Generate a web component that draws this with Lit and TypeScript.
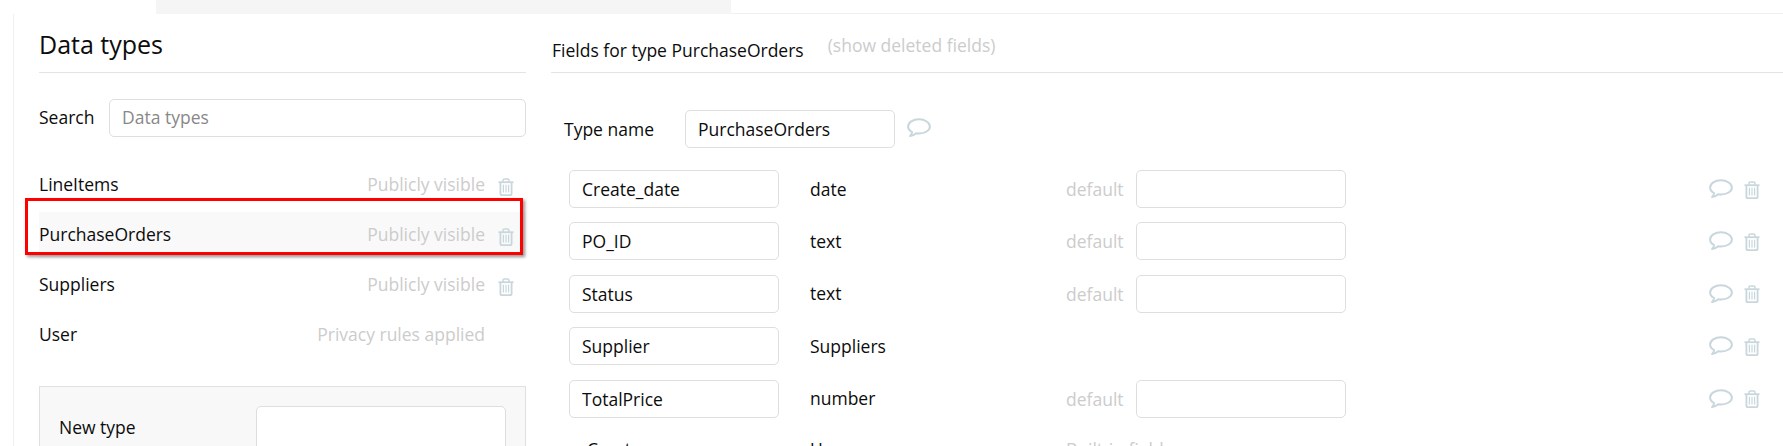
import { LitElement, html, css, svg } from "lit";
import { customElement } from "lit/decorators.js";

const comment = () => html`<svg class="comment" viewBox="0 0 24 20" width="24" height="20" aria-hidden="true">${svg`<path d="M12 1.3C6 1.3 1.1 4.5 1.1 8.6c0 2.3 1.6 4.3 4.1 5.5-.3 1.3-1 2.5-2.1 4 2.4-.4 4.6-1.5 6.1-2.8.9.1 1.8.2 2.8.2 6 0 10.9-3 10.9-6.9S18 1.3 12 1.3Z" fill="none" stroke="currentColor" stroke-width="2" stroke-linejoin="round"/>`}</svg>`;

const trash = () => html`<svg class="trash" viewBox="0 0 16 18" width="16" height="18" aria-hidden="true">${svg`<g fill="none" stroke="currentColor"><path d="M.5 4.2h15" stroke-width="1.8"/><path d="M5 4V2.4C5 1.4 5.6.9 6.4.9h3.2c.8 0 1.4.5 1.4 1.5V4" stroke-width="1.5"/><path d="M2.4 4.2v11.2c0 1 .7 1.7 1.6 1.7h8c.9 0 1.6-.7 1.6-1.7V4.2" stroke-width="1.8"/><path d="M5.4 6.8v7.6M8 6.8v7.6M10.6 6.8v7.6" stroke-width="1.2"/></g>`}</svg>`;

interface Field { name: string; type: string; hasDefault: boolean; }

const FIELDS: Field[] = [
  { name: "Create_date", type: "date", hasDefault: true },
  { name: "PO_ID", type: "text", hasDefault: true },
  { name: "Status", type: "text", hasDefault: true },
  { name: "Supplier", type: "Suppliers", hasDefault: false },
  { name: "TotalPrice", type: "number", hasDefault: true },
];

const TYPES = [
  { name: "LineItems", status: "Publicly visible", del: true, active: false },
  { name: "PurchaseOrders", status: "Publicly visible", del: true, active: true },
  { name: "Suppliers", status: "Publicly visible", del: true, active: false },
  { name: "User", status: "Privacy rules applied", del: false, active: false },
];

@customElement("app-root")
export class AppRoot extends LitElement {
  static styles = css`
    :host {
      display: block;
      width: 1783px;
      height: 446px;
      overflow: hidden;
      background: #fff;
      color: #0c0c0c;
      font-family: "Open Sans", sans-serif;
      font-size: 17.5px;
      line-height: 22px;
    }
    input {
      box-sizing: border-box;
      height: 38px;
      margin: 0;
      padding: 0 12px;
      border: 1px solid #dedede;
      border-radius: 5px;
      background: #fff;
      color: #0c0c0c;
      font: inherit;
      outline: none;
    }
    input::placeholder { color: #888; opacity: 1; }
    .comment, .trash { display: block; flex: none; color: #c9d7dd; }
    .top { display: flex; height: 14px; box-sizing: border-box; }
    .top .blank { width: 156px; }
    .top .strip { width: 575px; background: #f5f5f5; }
    .top .rest { flex: 1; border-bottom: 1px solid #f0f0f0; }
    .main {
      display: flex;
      height: 432px;
      margin-left: 13px;
      border-left: 1px solid #f0f0f0;
      padding-left: 25px;
      gap: 25px;
    }
    .left { position: relative; width: 487px; flex: none; }
    .right { flex: 1; min-width: 0; }
    .head {
      box-sizing: border-box;
      height: 59px;
      border-bottom: 1px solid #e4e4e4;
    }
    .title { font-size: 25px; line-height: 32px; padding-top: 14px; }
    .search { display: flex; align-items: center; margin-top: 26px; }
    .search label { width: 70px; margin-top: -2px; }
    .search input { flex: 1; height: 38px; padding-bottom: 2px; }
    .types { display: flex; flex-direction: column; gap: 4px; margin-top: 25px; }
    .type { display: flex; align-items: center; height: 46px; }
    .type.active { background: #f9f9f9; }
    .type .tname, .type .status { margin-top: -2px; }
    .status { margin-left: auto; color: #ccc; }
    .slot { width: 16px; margin: 4px 12px 0 13px; }
    .new-type {
      box-sizing: border-box;
      display: flex;
      height: 100px;
      margin-top: 28px;
      padding: 19px 19px;
      background: #f8f8f8;
      border: 1px solid #e0e0e0;
    }
    .new-type label { width: 197px; margin-top: 10px; flex: none; }
    .new-type input { width: 250px; height: 60px; flex: none; }
    .highlight {
      position: absolute;
      left: -14px;
      top: 184px;
      box-sizing: border-box;
      width: 498px;
      height: 57px;
      border: 3px solid #f00;
      box-shadow: 2px 2px 3px rgba(0, 0, 0, 0.4);
      pointer-events: none;
    }
    .fields-head { display: flex; padding-left: 1px; }
    .fields-title { padding-top: 25px; }
    .deleted { margin-left: 24px; padding-top: 20px; color: #ccc; }
    .name-row { display: flex; align-items: center; margin-top: 37px; padding-left: 13px; }
    .name-row label { width: 121px; }
    .name-row input { width: 210px; }
    .name-row .comment { margin-left: 12px; margin-top: -2px; }
    .rows { display: flex; flex-direction: column; gap: 14.4px; margin-top: 22px; padding-left: 18px; }
    .row { display: flex; align-items: center; height: 38px; }
    .row > input { width: 210px; }
    .row .kind { width: 256px; margin-left: 31px; margin-top: -1px; flex: none; }
    .row .dflt { display: flex; align-items: center; width: 280px; flex: none; color: #ccc; }
    .row .dflt span { width: 70px; }
    .row .dflt input { width: 210px; }
    .row .acts { display: flex; align-items: center; gap: 11px; margin-left: auto; margin-right: 23px; }
    .row .acts .trash { margin-top: 1px; }
    .last { display: flex; margin-top: 6px; }
    .last .nm { width: 224px; padding-left: 18px; box-sizing: border-box; flex: none; margin-right: 17px; }
    .last .kd { width: 256px; flex: none; }
    .last .bi { color: #ccc; }
  `;

  render() {
    return html`
      <div class="top"><div class="blank"></div><div class="strip"></div><div class="rest"></div></div>
      <div class="main">
        <section class="left">
          <div class="head title">Data types</div>
          <div class="search"><label>Search</label><input placeholder="Data types" /></div>
          <div class="types">
            ${TYPES.map(
              (t) => html`<div class="type ${t.active ? "active" : ""}">
                <span class="tname">${t.name}</span>
                <span class="status">${t.status}</span>
                <span class="slot">${t.del ? trash() : ""}</span>
              </div>`
            )}
          </div>
          <div class="new-type"><label>New type</label><input /></div>
          <div class="highlight"></div>
        </section>
        <section class="right">
          <div class="head fields-head">
            <div class="fields-title">Fields for type PurchaseOrders</div>
            <div class="deleted">(show deleted fields)</div>
          </div>
          <div class="name-row">
            <label>Type name</label>
            <input .value=${"PurchaseOrders"} />
            ${comment()}
          </div>
          <div class="rows">
            ${FIELDS.map(
              (f) => html`<div class="row">
                <input .value=${f.name} />
                <span class="kind">${f.type}</span>
                ${f.hasDefault
                  ? html`<div class="dflt"><span>default</span><input /></div>`
                  : html`<div class="dflt"></div>`}
                <div class="acts">${comment()}${trash()}</div>
              </div>`
            )}
            <div class="last">
              <span class="nm">Creator</span>
              <span class="kd">User</span>
              <span class="bi">Built-in field</span>
            </div>
          </div>
        </section>
      </div>
    `;
  }
}
